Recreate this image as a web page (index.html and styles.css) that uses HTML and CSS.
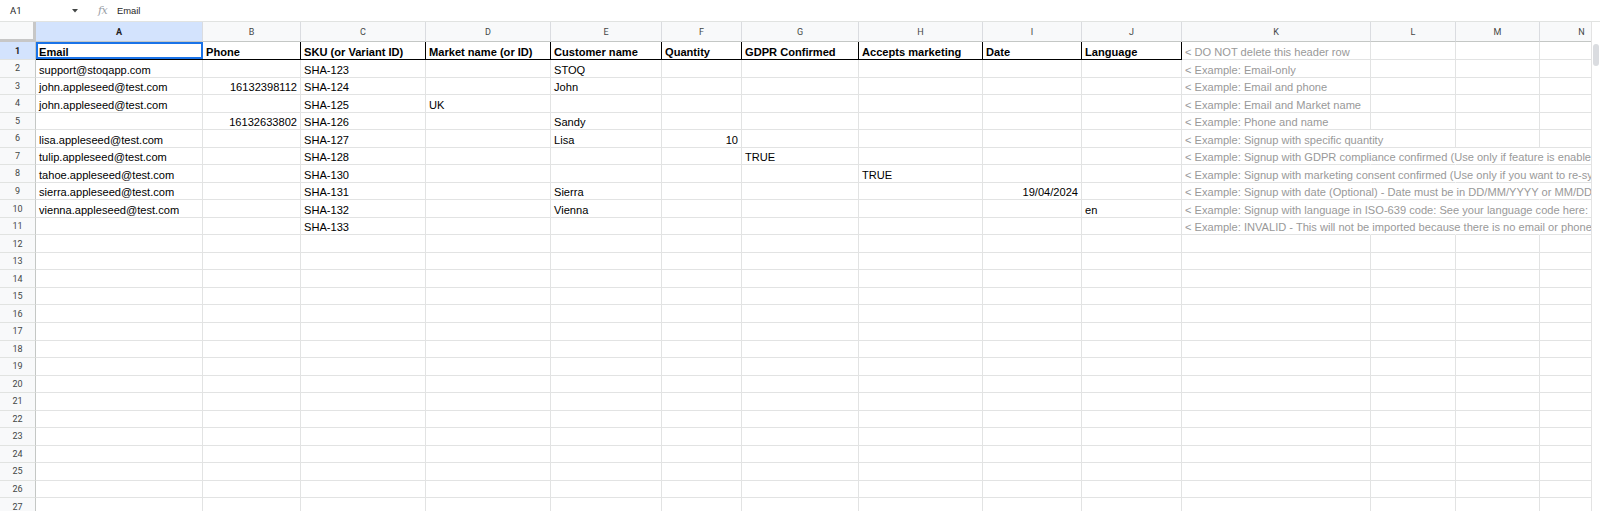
FILE: index.html
```html
<!DOCTYPE html>
<html lang="en">
<head>
<meta charset="utf-8">
<title>Sheet</title>
<link rel="stylesheet" href="styles.css">
</head>
<body>
<div class="top">
  <div class="name">A1</div>
  <svg class="caret" width="6" height="4" viewBox="0 0 6 4"><path d="M0 0H6L3 3.5Z" fill="#444746"/></svg>
  <div class="fx">fx</div>
  <div class="formula">Email</div>
</div>
<div class="sheet">
  <div class="view">
    <table class="grid">
      <colgroup>
        <col class="w-rh"><col class="w-a"><col class="w-b"><col class="w-c"><col class="w-d"><col class="w-e"><col class="w-f"><col class="w-g"><col class="w-h"><col class="w-i"><col class="w-j"><col class="w-k"><col class="w-l"><col class="w-m"><col class="w-n">
      </colgroup>
      <tr class="hr">
        <th class="corner"></th><th class="ch on">A</th><th class="ch">B</th><th class="ch">C</th><th class="ch">D</th><th class="ch">E</th><th class="ch">F</th><th class="ch">G</th><th class="ch">H</th><th class="ch">I</th><th class="ch">J</th><th class="ch">K</th><th class="ch">L</th><th class="ch">M</th><th class="ch">N</th>
      </tr>
      <tr class="r1">
        <th class="rh on">1</th><td class="b sel">Email</td><td class="b">Phone</td><td class="b">SKU (or Variant ID)</td><td class="b">Market name (or ID)</td><td class="b">Customer name</td><td class="b">Quantity</td><td class="b">GDPR Confirmed</td><td class="b">Accepts marketing</td><td class="b">Date</td><td class="b">Language</td><td class="k">&lt; DO NOT delete this header row</td><td></td><td></td><td></td>
      </tr>
      <tr class="r">
        <th class="rh">2</th><td>support@stoqapp.com</td><td></td><td>SHA-123</td><td></td><td>STOQ</td><td></td><td></td><td></td><td></td><td></td><td class="k">&lt; Example: Email-only</td><td></td><td></td><td></td>
      </tr>
      <tr class="r">
        <th class="rh">3</th><td>john.appleseed@test.com</td><td class="n">16132398112</td><td>SHA-124</td><td></td><td>John</td><td></td><td></td><td></td><td></td><td></td><td class="k">&lt; Example: Email and phone</td><td></td><td></td><td></td>
      </tr>
      <tr class="r">
        <th class="rh">4</th><td>john.appleseed@test.com</td><td></td><td>SHA-125</td><td>UK</td><td></td><td></td><td></td><td></td><td></td><td></td><td class="k">&lt; Example: Email and Market name</td><td></td><td></td><td></td>
      </tr>
      <tr class="r">
        <th class="rh">5</th><td></td><td class="n">16132633802</td><td>SHA-126</td><td></td><td>Sandy</td><td></td><td></td><td></td><td></td><td></td><td class="k">&lt; Example: Phone and name</td><td></td><td></td><td></td>
      </tr>
      <tr class="r">
        <th class="rh">6</th><td>lisa.appleseed@test.com</td><td></td><td>SHA-127</td><td></td><td>Lisa</td><td class="n">10</td><td></td><td></td><td></td><td></td><td class="k sp">&lt; Example: Signup with specific quantity</td><td></td><td></td><td></td>
      </tr>
      <tr class="r">
        <th class="rh">7</th><td>tulip.appleseed@test.com</td><td></td><td>SHA-128</td><td></td><td></td><td></td><td>TRUE</td><td></td><td></td><td></td><td class="k sp">&lt; Example: Signup with GDPR compliance confirmed (Use only if feature is enabled)</td><td class="sp"></td><td class="sp"></td><td class="sp"></td>
      </tr>
      <tr class="r">
        <th class="rh">8</th><td>tahoe.appleseed@test.com</td><td></td><td>SHA-130</td><td></td><td></td><td></td><td></td><td>TRUE</td><td></td><td></td><td class="k sp">&lt; Example: Signup with marketing consent confirmed (Use only if you want to re-sync consent)</td><td class="sp"></td><td class="sp"></td><td class="sp"></td>
      </tr>
      <tr class="r">
        <th class="rh">9</th><td>sierra.appleseed@test.com</td><td></td><td>SHA-131</td><td></td><td>Sierra</td><td></td><td></td><td></td><td class="n">19/04/2024</td><td></td><td class="k sp">&lt; Example: Signup with date (Optional) - Date must be in DD/MM/YYYY or MM/DD/YYYY format</td><td class="sp"></td><td class="sp"></td><td class="sp"></td>
      </tr>
      <tr class="r">
        <th class="rh">10</th><td>vienna.appleseed@test.com</td><td></td><td>SHA-132</td><td></td><td>Vienna</td><td></td><td></td><td></td><td></td><td>en</td><td class="k sp">&lt; Example: Signup with language in ISO-639 code: See your language code here: https://www.loc.gov/standards/iso639-2/</td><td class="sp"></td><td class="sp"></td><td class="sp"></td>
      </tr>
      <tr class="r">
        <th class="rh">11</th><td></td><td></td><td>SHA-133</td><td></td><td></td><td></td><td></td><td></td><td></td><td></td><td class="k sp">&lt; Example: INVALID - This will not be imported because there is no email or phone number</td><td class="sp"></td><td class="sp"></td><td class="sp"></td>
      </tr>
      <tr class="r"><th class="rh">12</th><td></td><td></td><td></td><td></td><td></td><td></td><td></td><td></td><td></td><td></td><td></td><td></td><td></td><td></td></tr>
      <tr class="r"><th class="rh">13</th><td></td><td></td><td></td><td></td><td></td><td></td><td></td><td></td><td></td><td></td><td></td><td></td><td></td><td></td></tr>
      <tr class="r"><th class="rh">14</th><td></td><td></td><td></td><td></td><td></td><td></td><td></td><td></td><td></td><td></td><td></td><td></td><td></td><td></td></tr>
      <tr class="r"><th class="rh">15</th><td></td><td></td><td></td><td></td><td></td><td></td><td></td><td></td><td></td><td></td><td></td><td></td><td></td><td></td></tr>
      <tr class="r"><th class="rh">16</th><td></td><td></td><td></td><td></td><td></td><td></td><td></td><td></td><td></td><td></td><td></td><td></td><td></td><td></td></tr>
      <tr class="r"><th class="rh">17</th><td></td><td></td><td></td><td></td><td></td><td></td><td></td><td></td><td></td><td></td><td></td><td></td><td></td><td></td></tr>
      <tr class="r"><th class="rh">18</th><td></td><td></td><td></td><td></td><td></td><td></td><td></td><td></td><td></td><td></td><td></td><td></td><td></td><td></td></tr>
      <tr class="r"><th class="rh">19</th><td></td><td></td><td></td><td></td><td></td><td></td><td></td><td></td><td></td><td></td><td></td><td></td><td></td><td></td></tr>
      <tr class="r"><th class="rh">20</th><td></td><td></td><td></td><td></td><td></td><td></td><td></td><td></td><td></td><td></td><td></td><td></td><td></td><td></td></tr>
      <tr class="r"><th class="rh">21</th><td></td><td></td><td></td><td></td><td></td><td></td><td></td><td></td><td></td><td></td><td></td><td></td><td></td><td></td></tr>
      <tr class="r"><th class="rh">22</th><td></td><td></td><td></td><td></td><td></td><td></td><td></td><td></td><td></td><td></td><td></td><td></td><td></td><td></td></tr>
      <tr class="r"><th class="rh">23</th><td></td><td></td><td></td><td></td><td></td><td></td><td></td><td></td><td></td><td></td><td></td><td></td><td></td><td></td></tr>
      <tr class="r"><th class="rh">24</th><td></td><td></td><td></td><td></td><td></td><td></td><td></td><td></td><td></td><td></td><td></td><td></td><td></td><td></td></tr>
      <tr class="r"><th class="rh">25</th><td></td><td></td><td></td><td></td><td></td><td></td><td></td><td></td><td></td><td></td><td></td><td></td><td></td><td></td></tr>
      <tr class="r"><th class="rh">26</th><td></td><td></td><td></td><td></td><td></td><td></td><td></td><td></td><td></td><td></td><td></td><td></td><td></td><td></td></tr>
      <tr class="r"><th class="rh">27</th><td></td><td></td><td></td><td></td><td></td><td></td><td></td><td></td><td></td><td></td><td></td><td></td><td></td><td></td></tr>
    </table>
  </div>
  <div class="vbar"><div class="thumb"></div></div>
</div>
</body>
</html>
```

FILE: styles.css
```css
html, body {
  margin: 0;
  padding: 0;
  background: #ffffff;
}
body {
  width: 1600px;
  height: 511px;
  overflow: hidden;
  font-family: "Liberation Sans", Arial, sans-serif;
  color: #000;
}

/* top formula bar */
.top {
  height: 21px;
  border-bottom: 1px solid #e1e3e1;
  display: flex;
  align-items: center;
  font-family: Roboto, "Liberation Sans", Arial, sans-serif;
  font-size: 9.5px;
  color: #1f1f1f;
}
.name {
  width: 72px;
  box-sizing: border-box;
  padding-left: 10px;
}
.caret {
  display: block;
  flex: none;
}
.fx {
  margin-left: 20px;
  width: 18px;
  font-family: "DejaVu Serif", "Liberation Serif", serif;
  font-style: italic;
  font-size: 11px;
  color: #9aa0a6;
  letter-spacing: -0.5px;
}
.formula {
  margin-left: 1px;
  font-family: "Liberation Sans", Arial, sans-serif;
  font-size: 9.4px;
  color: #1f1f1f;
}

/* sheet area */
.sheet {
  display: flex;
  height: 489px;
}
.view {
  width: 1591px;
  height: 489px;
  overflow: hidden;
  flex: none;
}
.vbar {
  flex: 1;
  border-left: 1px solid #e3e3e3;
  background: #fff;
}
.thumb {
  margin: 22px 0 0 1px;
  width: 6px;
  height: 22px;
  border-radius: 3px;
  background: #dadce0;
}

.grid {
  border-collapse: separate;
  border-spacing: 0;
  table-layout: fixed;
  width: 1624px;
}
.w-rh { width: 36px; }
.w-a { width: 167px; }
.w-b { width: 98px; }
.w-c { width: 125px; }
.w-d { width: 125px; }
.w-e { width: 111px; }
.w-f { width: 80px; }
.w-g { width: 117px; }
.w-h { width: 124px; }
.w-i { width: 99px; }
.w-j { width: 100px; }
.w-k { width: 189px; }
.w-l { width: 85px; }
.w-m { width: 84px; }
.w-n { width: 84px; }

.hr { height: 20px; }
.r1 { height: 18px; }
.r { height: 17.54px; }

th {
  padding: 0;
  font-family: Roboto, "Liberation Sans", Arial, sans-serif;
  font-weight: normal;
  font-size: 9px;
  color: #444746;
  text-align: center;
  vertical-align: middle;
  background: #f8f9fa;
}
.corner {
  background: #f8f9fa;
  border-right: 3px solid #c7c7c7;
  border-bottom: 3px solid #c7c7c7;
}
.ch {
  border-right: 1px solid #dadce0;
  border-bottom: 1px solid #c4c7c5;
}
.rh {
  border-right: 1px solid #c4c7c5;
  border-bottom: 1px solid #e1e3e1;
}
th.on {
  background: #d3e3fd;
  font-weight: bold;
  color: #1f1f1f;
}

td {
  padding: 0 3px 1px;
  font-size: 11.1px;
  line-height: normal;
  vertical-align: bottom;
  white-space: nowrap;
  overflow: visible;
  border-right: 1px solid #e2e3e3;
  border-bottom: 1px solid #e2e3e3;
}
td.n { text-align: right; }
td.k { color: #999999; }
td.sp { border-right-color: transparent; }
td.b {
  font-weight: bold;
  border-right-color: #000;
  border-bottom-color: #000;
}
td.sel { position: relative; }
td.sel::after {
  content: "";
  position: absolute;
  left: 0;
  top: 0;
  right: -1px;
  bottom: 0;
  border: 2px solid #1a73e8;
  pointer-events: none;
}
```
